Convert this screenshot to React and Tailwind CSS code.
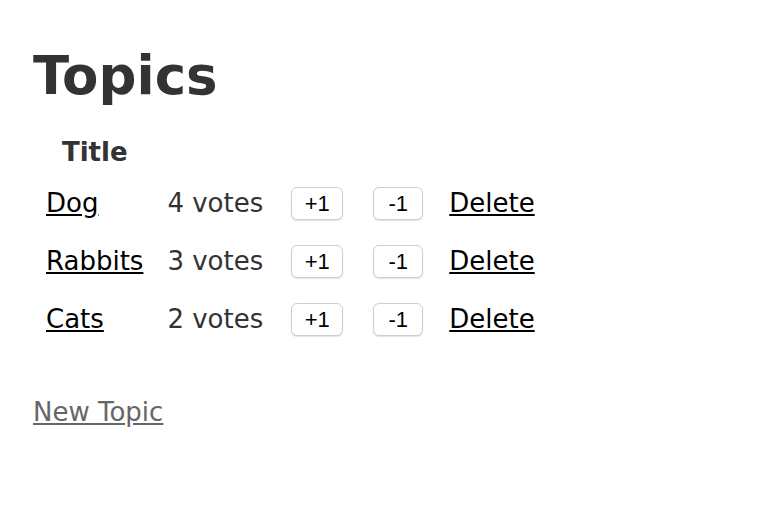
import React from "react";

const rows = [
  { title: "Dog", votes: 4 },
  { title: "Rabbits", votes: 3 },
  { title: "Cats", votes: 2 },
];

function Btn({ children, w }) {
  return (
    <button
      className={`${w} h-[33px] mt-[3px] ml-[4px] mr-[2px] rounded-[6px] border border-[#cfcfcf] bg-white text-[22px] leading-none text-black shadow-[0_1px_1px_rgba(0,0,0,0.12)] font-['Liberation_Sans',Arial,sans-serif]`}
    >
      {children}
    </button>
  );
}

export default function App() {
  return (
    <div className="min-h-[512px] bg-white px-[33px] pt-[46px] text-[#333] font-['DejaVu_Sans',Verdana,sans-serif] text-[26px] leading-[36px]">
      <h1 className="text-[53px] font-bold leading-[60px]">Topics</h1>
      <table className="mt-[24px] border-separate border-spacing-[4px] -ml-px">
        <thead>
          <tr>
            <th className="px-[10px] pb-[10px] text-center font-bold">Title</th>
            <th></th>
            <th></th>
            <th></th>
            <th></th>
          </tr>
        </thead>
        <tbody>
          {rows.map((r) => (
            <tr key={r.title}>
              <td className="px-[10px] pb-[14px] align-top">
                <div className="h-[40px] pt-px">
                  <a href="#" className="text-black underline">{r.title}</a>
                </div>
              </td>
              <td className="px-[10px] pb-[14px] align-top">
                <div className="h-[40px] pt-px">{r.votes} votes</div>
              </td>
              <td className="px-[10px] pb-[14px] align-top">
                <div className="h-[40px] flex items-start">
                  <Btn w="w-[52px]">+1</Btn>
                </div>
              </td>
              <td className="px-[10px] pb-[14px] align-top">
                <div className="h-[40px] flex items-start">
                  <Btn w="w-[50px]">-1</Btn>
                </div>
              </td>
              <td className="px-[10px] pb-[14px] align-top">
                <div className="h-[40px] pt-px">
                  <a href="#" className="text-black underline">Delete</a>
                </div>
              </td>
            </tr>
          ))}
        </tbody>
      </table>
      <div className="mt-[36px]">
        <a href="#" className="text-[#666] underline">New Topic</a>
      </div>
    </div>
  );
}
